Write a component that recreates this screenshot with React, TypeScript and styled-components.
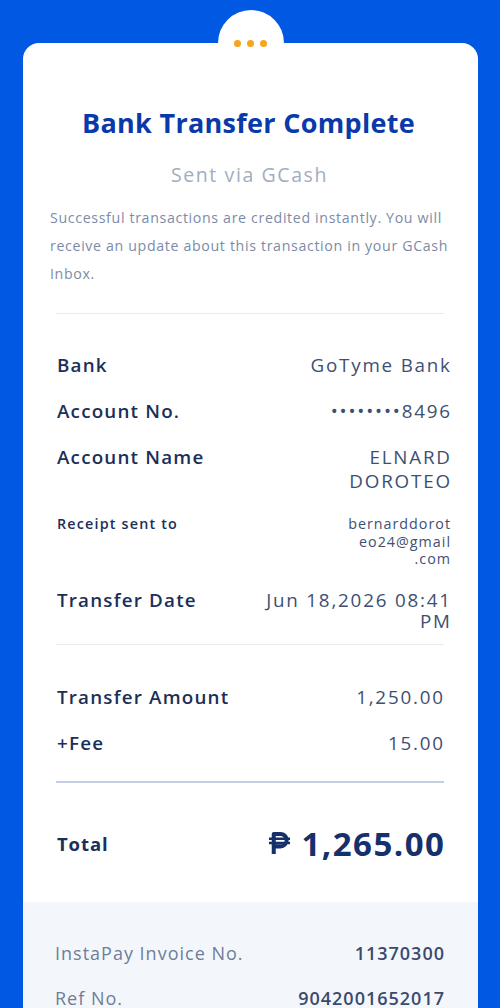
import { createGlobalStyle } from "styled-components";
import styled from "styled-components";

const GlobalStyle = createGlobalStyle`
  html, body {
    margin: 0;
    padding: 0;
    background: #0058e3;
  }
  body {
    font-family: "Open Sans", "Noto Sans", sans-serif;
  }
`;

const StyledPage = styled.main`
  width: 500px;
  height: 1008px;
  overflow: hidden;
  background: #0058e3;
  padding-top: 43px;
  box-sizing: border-box;
`;

const StyledCard = styled.section`
  position: relative;
  margin: 0 22px 0 23px;
  background: #ffffff;
  border-radius: 16px 16px 0 0;
  min-height: 965px;
  display: flex;
  flex-direction: column;
`;

const StyledBump = styled.div`
  position: absolute;
  top: -33px;
  left: 50%;
  transform: translateX(-50%);
  width: 66px;
  height: 66px;
  border-radius: 50%;
  background: #ffffff;
  display: flex;
  align-items: center;
  justify-content: center;
  gap: 6px;
  & span {
    width: 7px;
    height: 7px;
    border-radius: 50%;
    background: #f7a51c;
  }
`;

const StyledHeader = styled.header`
  display: flex;
  flex-direction: column;
  align-items: center;
  padding: 64px 20px 0;
`;

const StyledTitle = styled.h1`
  margin: 0 0 0 -4px;
  font-size: 27px;
  line-height: 32px;
  font-weight: 700;
  color: #0a3aa9;
  letter-spacing: 0.3px;
`;

const StyledSubtitle = styled.h2`
  margin: 24px 0 0 -2px;
  font-size: 19.5px;
  line-height: 24px;
  font-weight: 400;
  color: #a2adc0;
  letter-spacing: 1.6px;
`;

const StyledNote = styled.p`
  margin: 17px 0 0;
  padding-left: 7px;
  font-size: 14.2px;
  line-height: 28px;
  font-weight: 500;
  color: #7c8ba7;
  align-self: stretch;
  letter-spacing: 0.65px;
`;

const StyledDivider = styled.hr<{ $strong?: boolean; $top: number }>`
  border: none;
  height: ${({ $strong }) => ($strong ? "2px" : "1px")};
  background: ${({ $strong }) => ($strong ? "#c3cee0" : "#e6eaf1")};
  margin: ${({ $top }) => $top}px 34px 0 33px;
`;

const StyledRows = styled.div<{ $top: number; $right: number }>`
  display: flex;
  flex-direction: column;
  gap: 22px;
  padding: ${({ $top }) => $top}px ${({ $right }) => $right}px 0 34px;
`;

const StyledRow = styled.div<{ $small?: boolean; $tight?: boolean }>`
  display: flex;
  justify-content: space-between;
  align-items: flex-start;
  gap: 16px;
  font-size: ${({ $small }) => ($small ? "14.3px" : "18.8px")};
  line-height: ${({ $small, $tight }) =>
    $small ? "17.5px" : $tight ? "21px" : "24px"};
`;

const StyledLabel = styled.span`
  font-weight: 600;
  color: #1b2f58;
  white-space: nowrap;
  letter-spacing: 1.2px;
`;

const StyledValue = styled.span<{ $width?: number; $spacing?: number }>`
  text-align: right;
  color: #3e4f72;
  letter-spacing: ${({ $spacing }) => $spacing ?? 1.8}px;
  margin-right: -${({ $spacing }) => $spacing ?? 1.8}px;
  max-width: ${({ $width }) => ($width ? `${$width}px` : "none")};
`;

const StyledTotal = styled.div`
  display: flex;
  justify-content: space-between;
  align-items: center;
  padding: 41px 34px 0;
  height: 40px;
`;

const StyledTotalLabel = styled.span`
  font-size: 18.5px;
  font-weight: 700;
  color: #1b2f58;
  letter-spacing: 0.9px;
`;

const StyledTotalValue = styled.span`
  font-size: 33px;
  font-weight: 700;
  color: #15306a;
  display: flex;
  align-items: center;
  gap: 10px;
  letter-spacing: 1.5px;
  margin-right: -1.5px;
  & svg {
    width: 23px;
    height: 25px;
  }
`;

const StyledFooter = styled.div`
  margin-top: 38px;
  flex: 1;
  background: #f3f7fc;
  display: flex;
  flex-direction: column;
  gap: 21px;
  padding: 39px 34px 0 32px;
`;

const StyledFooterRow = styled.div`
  display: flex;
  justify-content: space-between;
  font-size: 18px;
  line-height: 24px;
  letter-spacing: 1px;
`;

const StyledFooterLabel = styled.span`
  color: #6f7d98;
`;

const StyledFooterValue = styled.span`
  color: #3b4a6c;
  font-weight: 600;
  margin-right: -1px;
`;

const PesoSign = () => (
  <svg viewBox="0 0 24 26">
    <path
      d="M6 24V3h7a6.5 6.5 0 0 1 0 13H6"
      fill="none"
      stroke="#15306a"
      strokeWidth="4.2"
      strokeLinejoin="round"
    />
    <path d="M1 8h22M1 12.5h22" stroke="#15306a" strokeWidth="2.6" />
  </svg>
);

const App = () => {
  return (
    <StyledPage>
      <GlobalStyle />
      <StyledCard>
        <StyledBump>
          <span />
          <span />
          <span />
        </StyledBump>
        <StyledHeader>
          <StyledTitle>Bank Transfer Complete</StyledTitle>
          <StyledSubtitle>Sent via GCash</StyledSubtitle>
          <StyledNote>
            Successful transactions are credited instantly. You will receive an
            update about this transaction in your GCash Inbox.
          </StyledNote>
        </StyledHeader>
        <StyledDivider $top={25} />
        <StyledRows $top={39} $right={28}>
          <StyledRow>
            <StyledLabel>Bank</StyledLabel>
            <StyledValue>GoTyme Bank</StyledValue>
          </StyledRow>
          <StyledRow>
            <StyledLabel>Account No.</StyledLabel>
            <StyledValue>••••••••8496</StyledValue>
          </StyledRow>
          <StyledRow>
            <StyledLabel>Account Name</StyledLabel>
            <StyledValue $width={110}>ELNARD DOROTEO</StyledValue>
          </StyledRow>
          <StyledRow $small>
            <StyledLabel>Receipt sent to</StyledLabel>
            <StyledValue $width={110} $spacing={1}>
              bernarddorot<wbr />eo24@gmail<wbr />.com
            </StyledValue>
          </StyledRow>
          <StyledRow $tight>
            <StyledLabel>Transfer Date</StyledLabel>
            <StyledValue $width={200}>Jun 18,2026 08:41 PM</StyledValue>
          </StyledRow>
        </StyledRows>
        <StyledDivider $top={12} />
        <StyledRows $top={40} $right={35}>
          <StyledRow>
            <StyledLabel>Transfer Amount</StyledLabel>
            <StyledValue>1,250.00</StyledValue>
          </StyledRow>
          <StyledRow>
            <StyledLabel>+Fee</StyledLabel>
            <StyledValue>15.00</StyledValue>
          </StyledRow>
        </StyledRows>
        <StyledDivider $strong $top={26} />
        <StyledTotal>
          <StyledTotalLabel>Total</StyledTotalLabel>
          <StyledTotalValue>
            <PesoSign />
            1,265.00
          </StyledTotalValue>
        </StyledTotal>
        <StyledFooter>
          <StyledFooterRow>
            <StyledFooterLabel>InstaPay Invoice No.</StyledFooterLabel>
            <StyledFooterValue>11370300</StyledFooterValue>
          </StyledFooterRow>
          <StyledFooterRow>
            <StyledFooterLabel>Ref No.</StyledFooterLabel>
            <StyledFooterValue>9042001652017</StyledFooterValue>
          </StyledFooterRow>
        </StyledFooter>
      </StyledCard>
    </StyledPage>
  );
};

export default App;
